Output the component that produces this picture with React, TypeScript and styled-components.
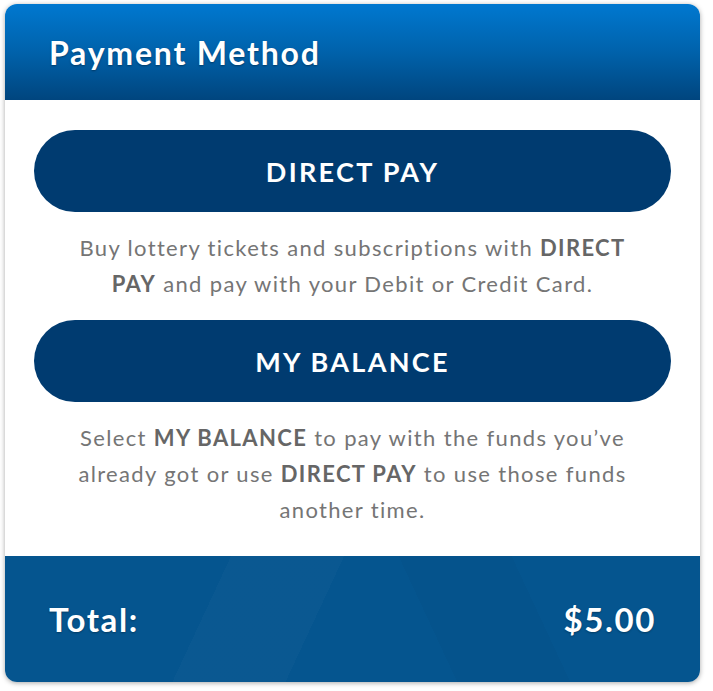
import { createGlobalStyle } from 'styled-components'
import styled from 'styled-components'

const GlobalStyle = createGlobalStyle`
  html, body {
    margin: 0;
    padding: 0;
    background: #ffffff;
  }
  body {
    font-family: Lato, 'Open Sans', sans-serif;
  }
`

const Page = styled.div`
  padding: 4px 13px 9px 5px;
`

const Card = styled.div`
  width: 695px;
  border-radius: 12px;
  overflow: hidden;
  background: #ffffff;
  box-shadow: 0 1px 5px rgba(0, 0, 0, 0.35);
`

const Header = styled.div`
  height: 96px;
  display: flex;
  align-items: center;
  padding: 0 44px;
  background: linear-gradient(180deg, #0078d0 0%, #0062ab 50%, #00457e 100%);
`

const Title = styled.h1`
  margin: 0;
  color: #ffffff;
  font-family: Lato, sans-serif;
  font-weight: 700;
  font-size: 32px;
  letter-spacing: 1.8px;
  text-shadow: 0 1px 2px rgba(0, 0, 0, 0.35);
`

const Body = styled.div`
  display: flex;
  flex-direction: column;
  padding: 30px 29px 28px;
`

const PayButton = styled.button<{ first?: boolean }>`
  height: 82px;
  width: 100%;
  flex-shrink: 0;
  border: none;
  border-radius: 41px;
  background: #003b70;
  color: #ffffff;
  font-family: Lato, sans-serif;
  font-weight: 700;
  font-size: 27px;
  letter-spacing: 2.3px;
  cursor: pointer;
  margin-top: ${({ first }) => (first ? '0' : '18px')};
`

const Note = styled.p`
  margin: 18px 38px 0;
  text-align: center;
  color: #757575;
  font-family: Lato, sans-serif;
  font-size: 22px;
  letter-spacing: 1.35px;
  line-height: 36px;

  b {
    color: #666666;
    font-weight: 700;
  }
`

const Footer = styled.div`
  height: 126px;
  display: flex;
  align-items: center;
  justify-content: space-between;
  padding: 0 44px;
  background-color: #05558f;
  background-image: linear-gradient(
      115deg,
      transparent 0 30%,
      rgba(255, 255, 255, 0.02) 30% 45%,
      transparent 45%
    ),
    linear-gradient(
      65deg,
      transparent 0 60%,
      rgba(0, 0, 0, 0.025) 60% 75%,
      transparent 75%
    );
`

const FooterText = styled.span`
  color: #ffffff;
  font-family: Lato, sans-serif;
  font-weight: 700;
  font-size: 33px;
  letter-spacing: 1.6px;
  text-shadow: 0 1px 2px rgba(0, 0, 0, 0.3);
`

export default function App() {
  return (
    <>
      <GlobalStyle />
      <Page>
        <Card>
          <Header>
            <Title>Payment Method</Title>
          </Header>
          <Body>
            <PayButton first>DIRECT PAY</PayButton>
            <Note>
              Buy lottery tickets and subscriptions with <b>DIRECT PAY</b> and
              pay with your Debit or Credit Card.
            </Note>
            <PayButton>MY BALANCE</PayButton>
            <Note>
              Select <b>MY BALANCE</b> to pay with the funds you’ve already got
              or use <b>DIRECT PAY</b> to use those funds another time.
            </Note>
          </Body>
          <Footer>
            <FooterText>Total:</FooterText>
            <FooterText>$5.00</FooterText>
          </Footer>
        </Card>
      </Page>
    </>
  )
}
